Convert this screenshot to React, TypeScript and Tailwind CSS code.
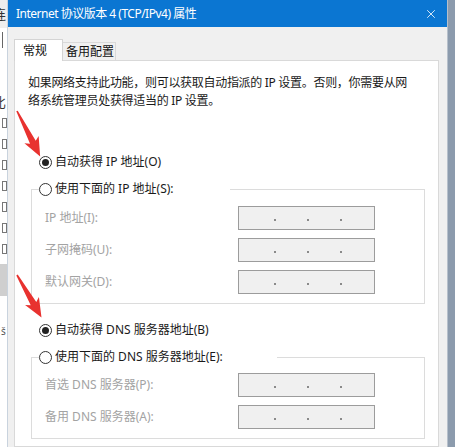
import { X } from "lucide-react";

const font = { fontFamily: '"Noto Sans", "Noto Sans CJK SC", sans-serif' };

function IpBox() {
  return (
    <div className="w-[137px] h-[24px] border border-[#9c9c9c] bg-[#f0f0f0] flex items-center pl-[35px] gap-[31px] pt-[3px]">
      <span className="w-[2px] h-[2px] bg-[#8a8a8a]" />
      <span className="w-[2px] h-[2px] bg-[#8a8a8a]" />
      <span className="w-[2px] h-[2px] bg-[#8a8a8a]" />
    </div>
  );
}

function Radio({ checked, label }: { checked?: boolean; label: string }) {
  return (
    <div className="flex items-center h-[18px] text-[12px] text-[#1a1a1a]">
      <span className="w-[13px] h-[13px] rounded-full border border-[#333] bg-white flex items-center justify-center">
        {checked && <span className="w-[7px] h-[7px] rounded-full bg-[#222]" />}
      </span>
      <span className="ml-[3px]">{label}</span>
    </div>
  );
}

function Row({ label }: { label: string }) {
  return (
    <div className="flex items-center h-[24px]">
      <span className="w-[206px] pl-[13px] text-[12px] text-[#a3a3a3]">{label}</span>
      <IpBox />
    </div>
  );
}

function Arrow({ x, y, angle, len }: { x: number; y: number; angle: number; len: number }) {
  const L = len;
  const pts = `0,-0.8 ${L - 16},-3.2 ${L - 19},-8 ${L},0 ${L - 19},8 ${L - 16},3.2 0,0.8`;
  return <polygon points={pts} fill="#e8322f" transform={`translate(${x} ${y}) rotate(${angle})`} />;
}

export default function App() {
  return (
    <div className="relative w-[455px] h-[447px] overflow-hidden flex bg-white" style={font}>
      {/* background window strip */}
      <div className="w-[8px] h-full bg-white border-r border-[#c9d3de] flex flex-col overflow-hidden text-[13px] text-[#333]">
        <div className="h-[28px] bg-[#eeeeee] -ml-[7px] leading-[28px]">连</div>
        <div className="h-[16px] mt-[4px] ml-[2px] w-[1px] bg-[#666]" />
        <div className="mt-[46px] -ml-[7px] leading-[16px]">比</div>
        <div className="mt-[8px] flex flex-col gap-[11px] ml-[2px]">
          {[0, 1, 2, 3, 4, 5, 6].map((i) => (
            <div key={i} className="w-[5px] h-[10px] border border-[#777]" />
          ))}
        </div>
        <div className="mt-[10px] h-[32px] bg-[#cfcfcf]" />
        <div className="mt-[28px] ml-[1px] text-[10px] text-[#555]">š</div>
      </div>

      {/* dialog */}
      <div className="w-[439px] h-full flex flex-col bg-[#f0f0f0]">
        <div className="h-[27px] bg-[#0b76d2] flex items-center justify-between pl-[8px] pr-[9px] text-white text-[12px]">
          <span className="tracking-[-0.5px]">Internet 协议版本 4 (TCP/IPv4) 属性</span>
          <X size={14} strokeWidth={1.4} color="#ffffff" />
        </div>

        <div className="pl-[6px] pr-[8px] pt-[11px] flex-1 flex flex-col">
          {/* tabs */}
          <div className="flex items-end h-[22px] text-[12px] text-[#111]">
            <div className="relative z-10 w-[49px] h-[22px] bg-white border border-b-0 border-[#d4d4d4] pl-[8px] pt-[2px] -mb-[1px]">
              常规
            </div>
            <div className="w-[53px] h-[18px] border border-l-0 border-b-0 border-[#d9d9d9] pl-[3px] leading-[18px]">
              备用配置
            </div>
          </div>

          {/* panel */}
          <div className="flex-1 bg-white border border-[#d9d9d9] pt-[13px] px-[13px]">
            <p className="text-[12px] leading-[18px] text-[#1a1a1a] tracking-[-0.3px]">
              如果网络支持此功能，则可以获取自动指派的 IP 设置。否则，你需要从网
              <br />
              络系统管理员处获得适当的 IP 设置。
            </p>

            <div className="mt-[43px] ml-[11px]">
              <Radio checked label="自动获得 IP 地址(O)" />
            </div>

            <fieldset className="mt-[9px] ml-[3px] w-[394px] border border-[#dcdcdc] pb-[9px]">
              <legend className="ml-[7px] pr-[56px] bg-white">
                <Radio label="使用下面的 IP 地址(S):" />
              </legend>
              <div className="mt-[8px] flex flex-col gap-[8px]">
                <Row label="IP 地址(I):" />
                <Row label="子网掩码(U):" />
                <Row label="默认网关(D):" />
              </div>
            </fieldset>

            <div className="mt-[17px] ml-[11px]">
              <Radio checked label="自动获得 DNS 服务器地址(B)" />
            </div>

            <fieldset className="mt-[9px] ml-[3px] w-[394px] border border-[#dcdcdc] pb-[9px]">
              <legend className="ml-[7px] pr-[54px] bg-white">
                <Radio label="使用下面的 DNS 服务器地址(E):" />
              </legend>
              <div className="mt-[7px] flex flex-col gap-[8px]">
                <Row label="首选 DNS 服务器(P):" />
                <Row label="备用 DNS 服务器(A):" />
              </div>
            </fieldset>
          </div>
        </div>
      </div>

      {/* desktop edge */}
      <div className="w-[8px] h-full bg-[#8c9bad] border-l border-[#b7c0cb]" />

      {/* red annotation arrows */}
      <svg className="absolute inset-0 pointer-events-none" width="455" height="447">
        <Arrow x={17} y={111} angle={63} len={51} />
        <Arrow x={17} y={275} angle={60} len={49} />
      </svg>
    </div>
  );
}
